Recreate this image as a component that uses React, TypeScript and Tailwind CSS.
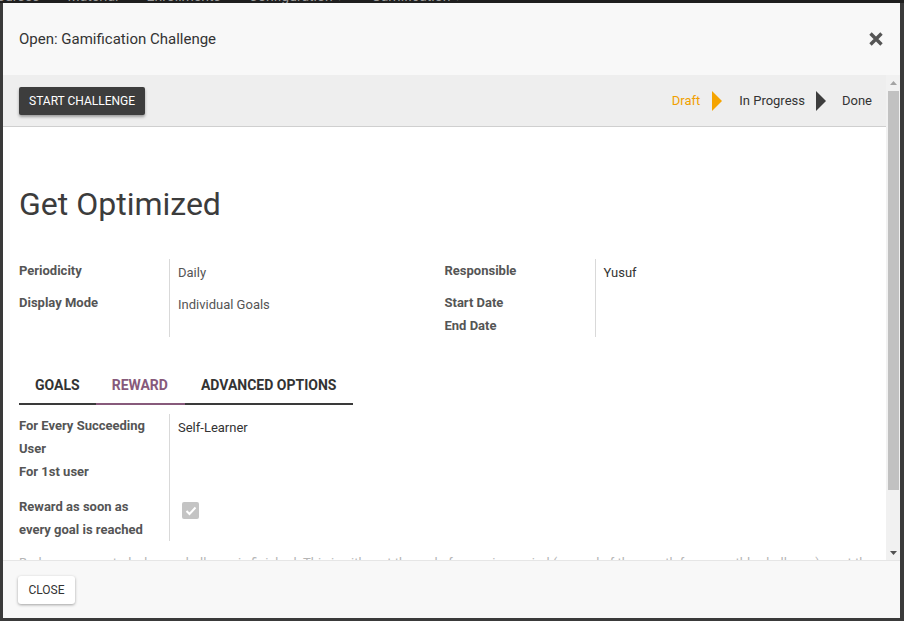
import React from "react";

function Arrow({ color }: { color: string }) {
  return (
    <svg width="10" height="20" viewBox="0 0 10 20" className="block">
      <polygon points="0,0 10,10 0,20" fill={color} />
    </svg>
  );
}

function Label({ children }: { children: React.ReactNode }) {
  return <div className="text-[13px] leading-[23px] font-bold text-[#555]">{children}</div>;
}

export default function App() {
  return (
    <div className="h-[621px] w-[904px] bg-[#3a3a3a] flex flex-col overflow-hidden font-['Roboto',sans-serif]">
      <div className="h-[3px] bg-[#1f1f1f] overflow-hidden shrink-0">
        <div className="flex -mt-[12px] -ml-[12px] gap-[28px] text-[14px] leading-[16px] text-[#9a9a9a] whitespace-nowrap">
          <span>Courses</span>
          <span>Material</span>
          <span>Enrollments</span>
          <span>Configuration ▾</span>
          <span>Gamification ▾</span>
        </div>
      </div>
      <div className="flex-1 flex pl-[3px] pr-[4px] pb-[3px] min-w-0">
        <div className="flex-1 min-w-0 flex flex-col bg-white">
          {/* header */}
          <div className="h-[72px] shrink-0 bg-[#f8f8f8] flex items-center justify-between pl-[16px] pr-[16px]">
            <div className="text-[15px] text-[#333]">Open: Gamification Challenge</div>
            <svg width="16" height="16" viewBox="0 0 16 16" className="block">
              <path d="M2.5 2.5 L13.5 13.5 M13.5 2.5 L2.5 13.5" stroke="#555" strokeWidth="3.4" strokeLinecap="butt" />
            </svg>
          </div>
          {/* body */}
          <div className="h-[485px] shrink-0 flex overflow-hidden min-w-0">
            <div className="flex-1 min-w-0 flex flex-col overflow-hidden">
              <div className="h-[52px] shrink-0 bg-[#eeeeee] border-b border-[#cfcfcf] flex items-center justify-between pl-[16px] pr-[14px]">
                <button className="h-[28px] px-[10px] bg-[#3d3d3d] text-white text-[12px] uppercase rounded-[2px] shadow-[0_2px_3px_rgba(0,0,0,0.35)]">
                  Start Challenge
                </button>
                <div className="flex items-center text-[13px]">
                  <span className="text-[#f0a000]">Draft</span>
                  <span className="ml-[12px]"><Arrow color="#f5a400" /></span>
                  <span className="ml-[17px] text-[#333]">In Progress</span>
                  <span className="ml-[11px]"><Arrow color="#3d3d3d" /></span>
                  <span className="ml-[16px] text-[#333]">Done</span>
                </div>
              </div>
              <div className="px-[16px] min-w-0">
                <div className="mt-[57px] text-[32px] leading-[40px] text-[#3c3c3c]">Get Optimized</div>
                <div className="mt-[35px] grid grid-cols-2">
                  <div className="grid grid-cols-[151px_1fr]">
                    <div className="border-r border-[#d9d9d9]">
                      <div className="h-[32px]"><Label>Periodicity</Label></div>
                      <div className="h-[32px]"><Label>Display Mode</Label></div>
                    </div>
                    <div className="pl-[8px] text-[13px] text-[#555]">
                      <div className="h-[32px] pt-[2px] leading-[23px]">Daily</div>
                      <div className="h-[32px] pt-[2px] leading-[23px]">Individual Goals</div>
                    </div>
                  </div>
                  <div className="grid grid-cols-[151px_1fr]">
                    <div className="border-r border-[#d9d9d9]">
                      <div className="h-[32px]"><Label>Responsible</Label></div>
                      <Label>Start Date</Label>
                      <Label>End Date</Label>
                    </div>
                    <div className="pl-[8px] text-[13px] text-[#333]">
                      <div className="h-[32px] pt-[2px] leading-[23px]">Yusuf</div>
                    </div>
                  </div>
                </div>
                <div className="mt-[30px] flex">
                  <div className="flex border-b-2 border-[#3a3a3a] text-[14px] font-bold uppercase leading-[16px]">
                    <div className="px-[16px] py-[10px] text-[#333]">Goals</div>
                    <div className="pl-[16px] pr-[17px] py-[10px] text-[#875a7b] border-b-2 border-[#875a7b] -mb-[2px]">Reward</div>
                    <div className="pl-[16px] pr-[17px] py-[10px] text-[#333]">Advanced Options</div>
                  </div>
                </div>
                <div className="mt-[9px] grid grid-cols-[151px_1fr] w-[425px]">
                  <div className="border-r border-[#d9d9d9]">
                    <Label>For Every Succeeding<br />User</Label>
                    <div className="h-[35px]"><Label>For 1st user</Label></div>
                    <Label>Reward as soon as<br />every goal is reached</Label>
                  </div>
                  <div className="pl-[8px] text-[13px] text-[#333]">
                    <div className="h-[81px] pt-[2px] leading-[23px]">Self-Learner</div>
                    <div className="pl-[4px] pt-[7px]">
                      <div className="w-[17px] h-[17px] rounded-[2px] bg-[#c4c4c4] flex items-center justify-center">
                        <svg width="12" height="10" viewBox="0 0 12 10">
                          <path d="M1.5 5 L4.5 8 L10.5 1.5" stroke="white" strokeWidth="2" fill="none" />
                        </svg>
                      </div>
                    </div>
                  </div>
                </div>
                <div className="mt-[10px] text-[13px] leading-[23px] text-[#b5b5b5] whitespace-nowrap overflow-hidden">
                  Badges are granted when a challenge is finished. This is either at the end of a running period (eg: end of the month for a monthly challenge), or at the end
                </div>
              </div>
            </div>
            {/* scrollbar */}
            <div className="w-[14px] shrink-0 bg-[#f1f1f1] flex flex-col items-center">
              <div className="h-[15px] flex items-center justify-center">
                <svg width="7" height="4" viewBox="0 0 7 4"><polygon points="0,4 3.5,0 7,4" fill="#a3a3a3" /></svg>
              </div>
              <div className="w-[11px] h-[399px] mt-[1px] bg-[#c1c1c1]" />
              <div className="flex-1" />
              <div className="h-[15px] flex items-center justify-center">
                <svg width="7" height="4" viewBox="0 0 7 4"><polygon points="0,0 3.5,4 7,0" fill="#505050" /></svg>
              </div>
            </div>
          </div>
          {/* footer */}
          <div className="h-[58px] shrink-0 bg-[#f8f8f8] border-t border-[#e6e6e6] pl-[15px] pt-[15px]">
            <button className="h-[28px] w-[57px] bg-white text-[12px] text-[#333] uppercase rounded-[3px] shadow-[0_1px_3px_rgba(0,0,0,0.35)]">
              Close
            </button>
          </div>
        </div>
      </div>
    </div>
  );
}
